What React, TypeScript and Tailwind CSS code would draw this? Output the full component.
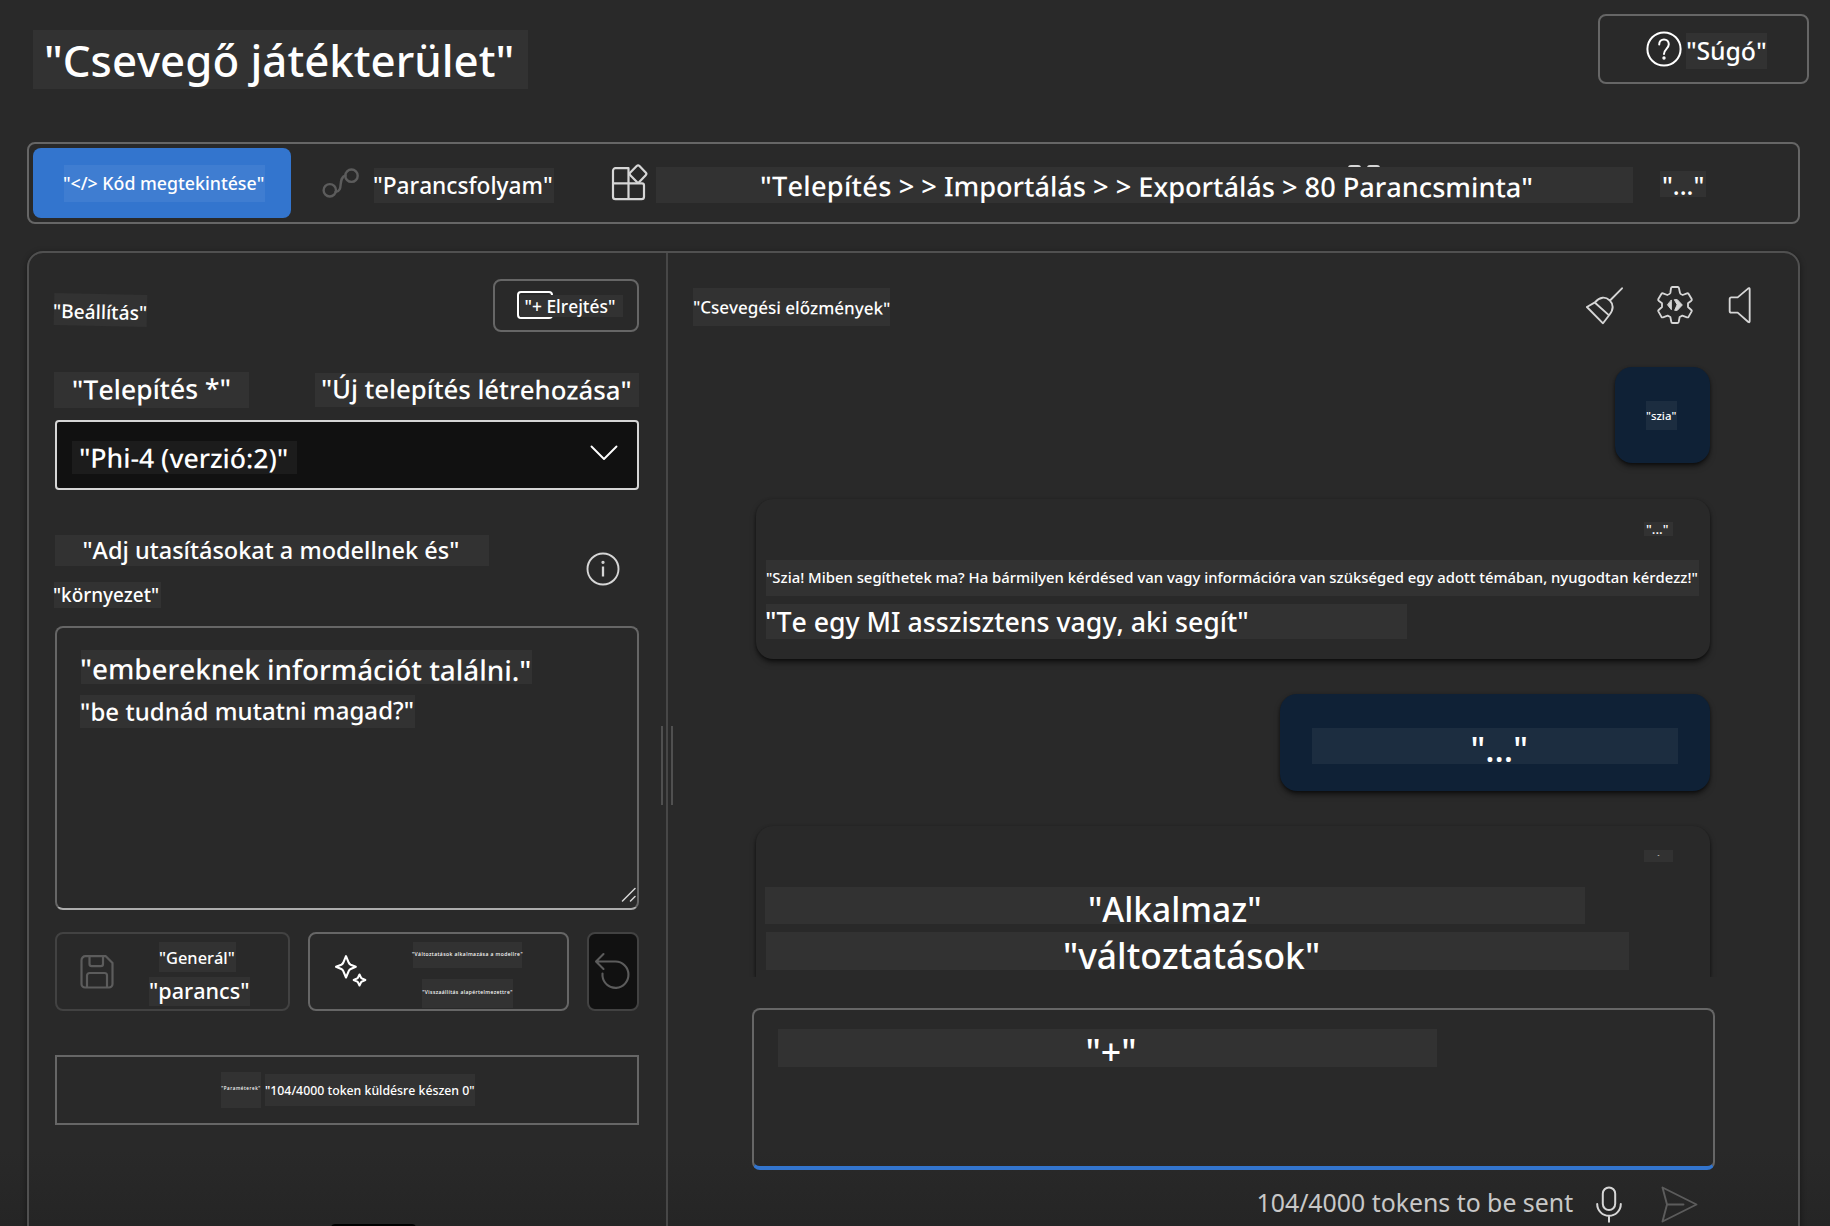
import type { ReactNode } from "react";

type LabelProps = { bg?: string; className?: string; textClass?: string; children: ReactNode };

function Label({ bg = "bg-[#323232]", className = "", textClass = "", children }: LabelProps) {
  return (
    <div className={`flex shrink-0 items-start font-medium leading-none whitespace-nowrap text-white [font-kerning:none] ${bg} ${className}`}>
      <span className={textClass}>{children}</span>
    </div>
  );
}

const stroke = { fill: "none", strokeLinecap: "round", strokeLinejoin: "round" } as const;

function HelpIcon() {
  return (
    <svg width="36" height="36" viewBox="0 0 36 36" stroke="#fff" strokeWidth="2" {...stroke}>
      <circle cx="18" cy="18" r="16.6" />
      <path d="M13.200 13.500c0-3.200 2.100-5.100 4.800-5.100s4.800 1.900 4.800 4.900c0 4.200-4.800 5-4.800 9.700" />
      <circle cx="18" cy="27" r="0.700" fill="#fff" />
    </svg>
  );
}

function FlowIcon() {
  return (
    <svg width="38" height="34" viewBox="0 0 38 34" stroke="#5c5c5c" strokeWidth="2.400" {...stroke}>
      <circle cx="7.800" cy="24.300" r="6.200" />
      <circle cx="29.500" cy="9.700" r="6.200" />
      <path d="M13.500 26c9-1 1.500-14 10-16.500" />
    </svg>
  );
}

function AppsIcon() {
  return (
    <svg width="37" height="38" viewBox="0 0 37 38" stroke="#d6d6d6" strokeWidth="2.200" {...stroke}>
      <path d="M17.500 4.200H4.500a2.500 2.500 0 0 0-2.500 2.500v26a2.500 2.500 0 0 0 2.500 2.500h26a2.500 2.500 0 0 0 2.500-2.500V21.400a2 2 0 0 0-2-2H2M17.500 4.200v31" />
      <path d="M25.700 2a2 2 0 0 1 2.800 0l6.200 6.400a2 2 0 0 1 0 2.800l-6.200 6.600a2 2 0 0 1-2.800 0l-6.400-6.600a2 2 0 0 1 0-2.800z" />
    </svg>
  );
}

function BroomIcon() {
  return (
    <svg width="38" height="38" viewBox="0 0 38 38" stroke="#d6d6d6" strokeWidth="1.900" {...stroke}>
      <path d="M36 1.300 24 13.500M.9 20l8-4.600c5-5.800 10.500-6 14.600-2.200 4 4 4 9.500-.2 14.800L17 36.300zM9 15.700l13.800 12.400" />
    </svg>
  );
}

function GearIcon() {
  return (
    <svg width="36" height="38" viewBox="246 33 108 114" stroke="#d6d6d6" strokeWidth="5.500" {...stroke}>
      <path d="M292 36h16q3 0 4 4l3 14q0 3 8 6l13-5q3-1 5 2l9 15q1 3-1 5l-10 8v11l10 9q2 2 1 4l-9 16q-2 3-5 2l-14-5-8 4-3 15q-1 3-4 3h-14q-4 0-4-3l-3-15-8-4-14 5q-3 1-5-2l-9-16q-1-2 1-4l10-9V85l-10-8q-2-2-1-5l9-15q2-3 5-2l13 5q8-3 9-6l2-14q1-4 4-4z" />
      <path d="M289 76v28l-11-14zM299 74h8l15 16-15 16h-8l7-16z" fill="#d6d6d6" strokeWidth="3" />
    </svg>
  );
}

function SpeakerIcon() {
  return (
    <svg width="24" height="37" viewBox="458 35 72 111" stroke="#d6d6d6" strokeWidth="5.500" {...stroke}>
      <path d="M468 66h19l32-27q4-2 4 2v97q0 4-4 2l-32-28h-19q-5 0-5-5V71q0-5 5-5z" />
    </svg>
  );
}

function InfoIcon() {
  return (
    <svg width="34" height="34" viewBox="0 0 34 34" stroke="#d6d6d6" strokeWidth="1.900" {...stroke}>
      <circle cx="17" cy="17" r="15.500" />
      <path d="M17 14.500v10" strokeLinecap="butt" strokeWidth="2.300" />
      <circle cx="17" cy="10.300" r="0.700" fill="#d6d6d6" />
    </svg>
  );
}

function SaveIcon() {
  return (
    <svg width="34" height="34" viewBox="0 0 34 34" stroke="#5c5c5c" strokeWidth="2.200" {...stroke}>
      <path d="M5.500 1.200h20.300L32.500 8v21a3.500 3.500 0 0 1-3.500 3.500H5A3.500 3.500 0 0 1 1.500 29V5.200a4 4 0 0 1 4-4z" />
      <path d="M9.500 1.500v7.500a2.200 2.200 0 0 0 2.200 2.200h9.100A2.200 2.200 0 0 0 23 9V1.500M7 32V20.500A2.500 2.500 0 0 1 9.500 18h15a2.500 2.500 0 0 1 2.500 2.500V32" />
    </svg>
  );
}

function SparkleIcon() {
  return (
    <svg width="34" height="34" viewBox="0 0 34 34" stroke="#fff" strokeWidth="2.100" {...stroke}>
      <path d="M12 2.200l2.800 6.600q.6 1.300 1.900 1.900l5.100 2.100-5.100 2.200q-1.300.6-1.900 1.900L12 23.500l-2.800-6.600q-.6-1.300-1.900-1.900L2 12.800l5.300-2.100q1.300-.6 1.900-1.900z" />
      <path d="M25.500 20.500l1.800 3.600 4 1.900-4 1.900-1.800 3.600-1.800-3.600-4-1.900 4-1.900z" />
    </svg>
  );
}

function UndoIcon() {
  return (
    <svg width="38" height="38" viewBox="0 0 38 38" stroke="#5c5c5c" strokeWidth="2.100" {...stroke}>
      <path d="M9.500 2 2 9.500 9.500 17M2.500 9.500H21.500a13 13.200 0 1 1-13 14.500v-2.500" />
    </svg>
  );
}

function MicIcon() {
  return (
    <svg width="30" height="38" viewBox="0 0 30 38" stroke="#d6d6d6" strokeWidth="2" {...stroke}>
      <rect x="8.800" y="1.500" width="12.400" height="22.500" rx="6.200" />
      <path d="M3.200 18a11.800 11.800 0 0 0 23.600 0M15 30v5.800" />
    </svg>
  );
}

function SendIcon() {
  return (
    <svg width="37" height="37" viewBox="0 0 37 37" stroke="#5c5c5c" strokeWidth="1.900" {...stroke}>
      <path d="M1.500 1.500 35.500 18.500 1.500 35.500l4.500-17zM6 18.500h16.500" />
    </svg>
  );
}

function Toolbar() {
  return (
    <div className="mt-[53px] ml-[27px] flex h-[82px] w-[1773px] items-start rounded-lg border-2 border-[#666]">
      <button className="mt-1 ml-1 flex h-[70px] w-[258px] items-start rounded-lg bg-[#3375ce]">
        <Label bg="bg-[#3f7dd1]" className="mt-[17px] ml-[31px] h-[37px] w-[201px]" textClass="-ml-px pt-[9.500px] text-[17.750px]">"&lt;/&gt; Kód megtekintése"</Label>
      </button>
      <div className="mt-[22px] ml-[31px]"><FlowIcon /></div>
      <Label className="mt-6 ml-[14px] h-[35px] w-[180px]" textClass="-ml-px pt-[6.500px] text-[22.700px]">"Parancsfolyam"</Label>
      <div className="mt-5 ml-[57px]"><AppsIcon /></div>
      <div className="relative mt-[23px] ml-[8px]">
        <div className="absolute -top-[2px] left-[692px] flex gap-[6px]">
          <i className="h-[3px] w-[13px] rounded-t bg-[#d6d6d6]" />
          <i className="h-[3px] w-[13px] rounded-t bg-[#d6d6d6]" />
        </div>
        <Label className="relative h-9 w-[977px]" textClass="origin-left rotate-[0.1deg] ml-[104px] pt-[4.700px] text-[27.150px]">
          <span className="tracking-[0.300px]">"Telepítés</span> &gt; &gt; Importálás &gt; &gt; Exportálás &gt; 80 Parancsminta"
        </Label>
      </div>
      <Label className="mt-[27px] ml-[27px] h-[26px] w-[46px]" textClass="ml-[2px] pt-[2px] text-[25.300px]">"..."</Label>
    </div>
  );
}

function SetupPanel() {
  return (
    <section className="w-[637px] shrink-0 pl-[26px]">
      <div className="flex h-[119px] items-start justify-between pt-[26px] pr-[27px]">
        <Label className="mt-[15px] -ml-px h-[32px] w-[93px] rotate-[1.300deg]" textClass="-ml-px pt-[8px] text-[19.200px]">"Beállítás"</Label>
        <button className="relative flex h-[53px] w-[146px] items-start rounded-lg border-2 border-[#666]">
          <i className="absolute top-[10px] left-[22px] h-[28px] w-[36px] rounded border-2 border-white" />
          <Label className="relative mt-[14px] ml-[25px] h-[22px] w-[103px]" textClass="ml-[4.500px] pt-[2.700px] text-[17.400px]">"+ Elrejtés"</Label>
        </button>
      </div>
      <div className="-ml-px flex h-[48px] items-start">
        <Label className="h-9 w-[195px]" textClass="ml-[18px] rotate-[-0.500deg] pt-[3.500px] text-[26.600px]">"Telepítés *"</Label>
        <Label className="mt-px ml-[66px] h-[34px] w-[324px]" textClass="ml-[6px] rotate-[0.300deg] pt-[4px] text-[25.700px]">"Új telepítés létrehozása"</Label>
      </div>
      <div className="flex h-[70px] w-[584px] items-start rounded border-2 border-[#d6d6d6] bg-[#111]">
        <Label bg="bg-[#1c1c1c]" className="mt-[19px] ml-[15px] h-[33px] w-[225px]" textClass="ml-[7px] rotate-[0.200deg] pt-[4.300px] text-[26.600px]">"Phi-4 (verzió:2)"</Label>
        <svg className="mt-[23px] ml-[293px]" width="28" height="16" viewBox="0 0 28 16" stroke="#fff" strokeWidth="1.900" {...stroke}>
          <path d="M1.500 1.500 14 14 26.500 1.500" />
        </svg>
      </div>
      <div className="mt-[45px] flex h-[91px] items-start">
        <div className="flex w-[532px] flex-col gap-4">
          <Label className="h-[31px] w-[434px]" textClass="ml-[27.500px] pt-[3.700px] text-[23.500px]">"Adj utasításokat a modellnek és"</Label>
          <Label className="-ml-px h-[26px] w-[107px]" textClass="-ml-px pt-[3.700px] text-[18.900px]">"környezet"</Label>
        </div>
        <div className="mt-[17px] -ml-px"><InfoIcon /></div>
      </div>
      <div className="relative h-[284px] w-[584px] rounded-lg border-2 border-[#666] border-b-[#adadad]">
        <Label className="mt-[22px] ml-[24px] h-[34px] w-[451px]" textClass="-ml-px rotate-[0.200deg] pt-[5.500px] text-[27.850px]">"embereknek információt találni."</Label>
        <Label className="mt-[11px] ml-[23px] h-[33px] w-[335px]" textClass="rotate-[-0.300deg] pt-[3.500px] text-[24.100px]">"be tudnád mutatni magad?"</Label>
        <svg className="absolute right-[1px] bottom-[6px]" width="15" height="15" viewBox="0 0 15 15" stroke="#d6d6d6" strokeWidth="1.500" {...stroke}>
          <path d="M1.500 14 14 1.500M9.500 14 14 9.500" />
        </svg>
      </div>
      <div className="mt-[22px] flex h-[79px] w-[584px] items-stretch">
        <button className="flex w-[235px] items-start rounded-lg border-2 border-[#424242]">
          <div className="mt-[20.500px] ml-[23px]"><SaveIcon /></div>
          <div className="mt-2 ml-[35px] flex w-[101px] flex-col gap-[5px]">
            <Label className="ml-[10px] h-[30px] w-[77px]" textClass="pt-[7.500px] text-[16.400px]">"Generál"</Label>
            <Label className="h-[29px] w-[101px]" textClass="pt-[3px] text-[21.600px]">"parancs"</Label>
          </div>
        </button>
        <button className="ml-[18px] flex w-[261px] items-start rounded-lg border-2 border-[#666]">
          <div className="mt-[20px] ml-[24px]"><SparkleIcon /></div>
          <div className="mt-2 ml-[45px] flex w-[109px] flex-col items-center gap-[11px]">
            <Label className="h-[26px] w-[109px] justify-center" textClass="pt-[10px] text-[5px] tracking-[0.440px]">"Változtatások alkalmazása a modellre"</Label>
            <Label className="h-[29px] w-[91px] justify-center" textClass="pt-[11px] text-[5px] tracking-[0.400px]">"Visszaállítás alapértelmezettre"</Label>
          </div>
        </button>
        <button className="ml-[18px] flex w-[52px] items-start rounded-lg border-2 border-[#424242] bg-[#111]">
          <div className="mt-[18px] ml-[5px] w-[38px]"><UndoIcon /></div>
        </button>
      </div>
      <div className="mt-[44px] flex h-[70px] w-[584px] items-start border-2 border-[#666]">
        <Label className="mt-[15px] ml-[164px] h-9 w-10 justify-center" textClass="pt-[14px] text-[4.500px] tracking-[0.600px]">"Paraméterek"</Label>
        <Label className="mt-[17px] ml-1 h-8 w-[210px]" textClass="pt-[11px] text-[12.300px]">"104/4000 token küldésre készen 0"</Label>
      </div>
      <div className="mt-[99px] ml-[276px] h-4 w-[85px] rounded-t bg-black" />
    </section>
  );
}

function Divider() {
  return (
    <div className="relative w-[2px] shrink-0 bg-[#474747]">
      <div className="absolute top-[473px] -left-[5px] h-[79px] w-[12px] border-x-2 border-[#505050]" />
    </div>
  );
}

const cardShadow = "shadow-[0_4px_6px_-1px_rgba(0,0,0,0.6),0_1px_3px_rgba(0,0,0,0.4)]";

function ChatPanel() {
  return (
    <section className="flex min-w-0 flex-1 flex-col">
      <div className="flex h-[98px] shrink-0 items-start pl-[25px]">
        <Label className="mt-[35px] h-[38px] w-[197px]" textClass="rotate-[0.400deg] pt-[10.500px] text-[17px]">"Csevegési előzmények"</Label>
        <div className="mt-[34px] ml-[696px]"><BroomIcon /></div>
        <div className="mt-[32.500px] ml-[33px]"><GearIcon /></div>
        <div className="mt-[33.500px] ml-[35px]"><SpeakerIcon /></div>
      </div>
      <div className="flex h-[626px] shrink-0 flex-col items-end overflow-hidden pt-[16px] pr-[88px]">
        <div className={`h-24 w-[95px] shrink-0 rounded-[17px] bg-[#0f2136] pt-[34px] pl-[31px] ${cardShadow}`}>
          <Label bg="bg-[#1c2d40]" className="h-[29px] w-[31px]" textClass="pt-[9px] text-[11.400px]">"szia"</Label>
        </div>
        <div className={`mt-9 h-40 w-[954px] shrink-0 rounded-[17px] bg-[#292929] pt-[23px] pl-[10px] ${cardShadow}`}>
          <Label className="ml-[878px] h-[14px] w-[29px]" textClass="ml-[2px] pt-px text-[13.400px]">"..."</Label>
          <Label className="mt-6 h-9 w-[933px]" textClass="pt-[9.500px] text-[14.870px]">"Szia! Miben segíthetek ma? Ha bármilyen kérdésed van vagy információra van szükséged egy adott témában, nyugodtan kérdezz!"</Label>
          <Label className="mt-2 h-[35px] w-[641px]" textClass="-ml-px pt-[4.500px] text-[26.700px]">"Te egy MI asszisztens vagy, aki segít"</Label>
        </div>
        <div className={`mt-[35px] h-[97px] w-[430px] shrink-0 rounded-[17px] bg-[#0f2136] pt-[34px] pl-8 ${cardShadow}`}>
          <Label bg="bg-[#1c2d40]" className="h-9 w-[366px]" textClass="ml-[158.500px] pt-[3.700px] text-[34.300px]">"..."</Label>
        </div>
        <div className={`mt-[35px] h-[151px] w-[954px] shrink-0 rounded-t-[17px] bg-[#292929] pt-6 pl-[10px] ${cardShadow}`}>
          <Label className="ml-[878px] h-3 w-[29px] justify-center" textClass="pt-[2px] text-[6px]">-</Label>
          <Label className="mt-[25px] -ml-px h-[37px] w-[820px]" textClass="ml-[323px] pt-[5.500px] text-[33.500px]">"Alkalmaz"</Label>
          <Label className="mt-2 h-[38px] w-[863px]" textClass="ml-[297px] pt-[5.500px] text-[35.400px]">"változtatások"</Label>
        </div>
      </div>
      <div className="mt-[31px] ml-[84px] h-[162px] w-[963px] shrink-0 overflow-hidden rounded-lg border-2 border-b-4 border-[#666] border-b-[#3375ce]">
        <Label className="mt-[19px] ml-6 h-[38px] w-[659px]" textClass="ml-[307.500px] pt-[5px] text-[35.700px]">"+"</Label>
      </div>
      <div className="flex h-[56px] shrink-0 items-start">
        <span className="mt-[20px] ml-[588.500px] w-[318px] text-[24.850px] leading-none whitespace-nowrap text-[#c8c8c8]">104/4000 tokens to be sent</span>
        <div className="mt-[16px] ml-[19px]"><MicIcon /></div>
        <div className="mt-[16px] ml-[37.500px]"><SendIcon /></div>
      </div>
    </section>
  );
}

export default function App() {
  return (
    <div className="h-[1226px] w-[1830px] overflow-hidden bg-[linear-gradient(#292929_1150px,#252525_1226px)] font-['Noto_Sans',sans-serif]">
      <header className="flex h-[89px] items-start">
        <Label className="mt-[30px] ml-[33px] h-[59px] w-[495px]" textClass="ml-[11px] pt-[9px] text-[43.800px]">"Csevegő játékterület"</Label>
        <button className="mt-[14px] ml-[1070px] flex h-[70px] w-[211px] items-start rounded-lg border-2 border-[#666]">
          <div className="mt-[15px] ml-[46px]"><HelpIcon /></div>
          <Label className="mt-[17px] ml-1 h-9 w-[81px]" textClass="rotate-[0.500deg] pt-[6px] text-[24.700px]">"Súgó"</Label>
        </button>
      </header>
      <Toolbar />
      <main className="mt-[27px] ml-[27px] flex h-[1000px] w-[1773px] rounded-2xl border-2 border-[#505050] shadow-[0_2px_6px_rgba(0,0,0,0.45)]">
        <SetupPanel />
        <Divider />
        <ChatPanel />
      </main>
    </div>
  );
}
